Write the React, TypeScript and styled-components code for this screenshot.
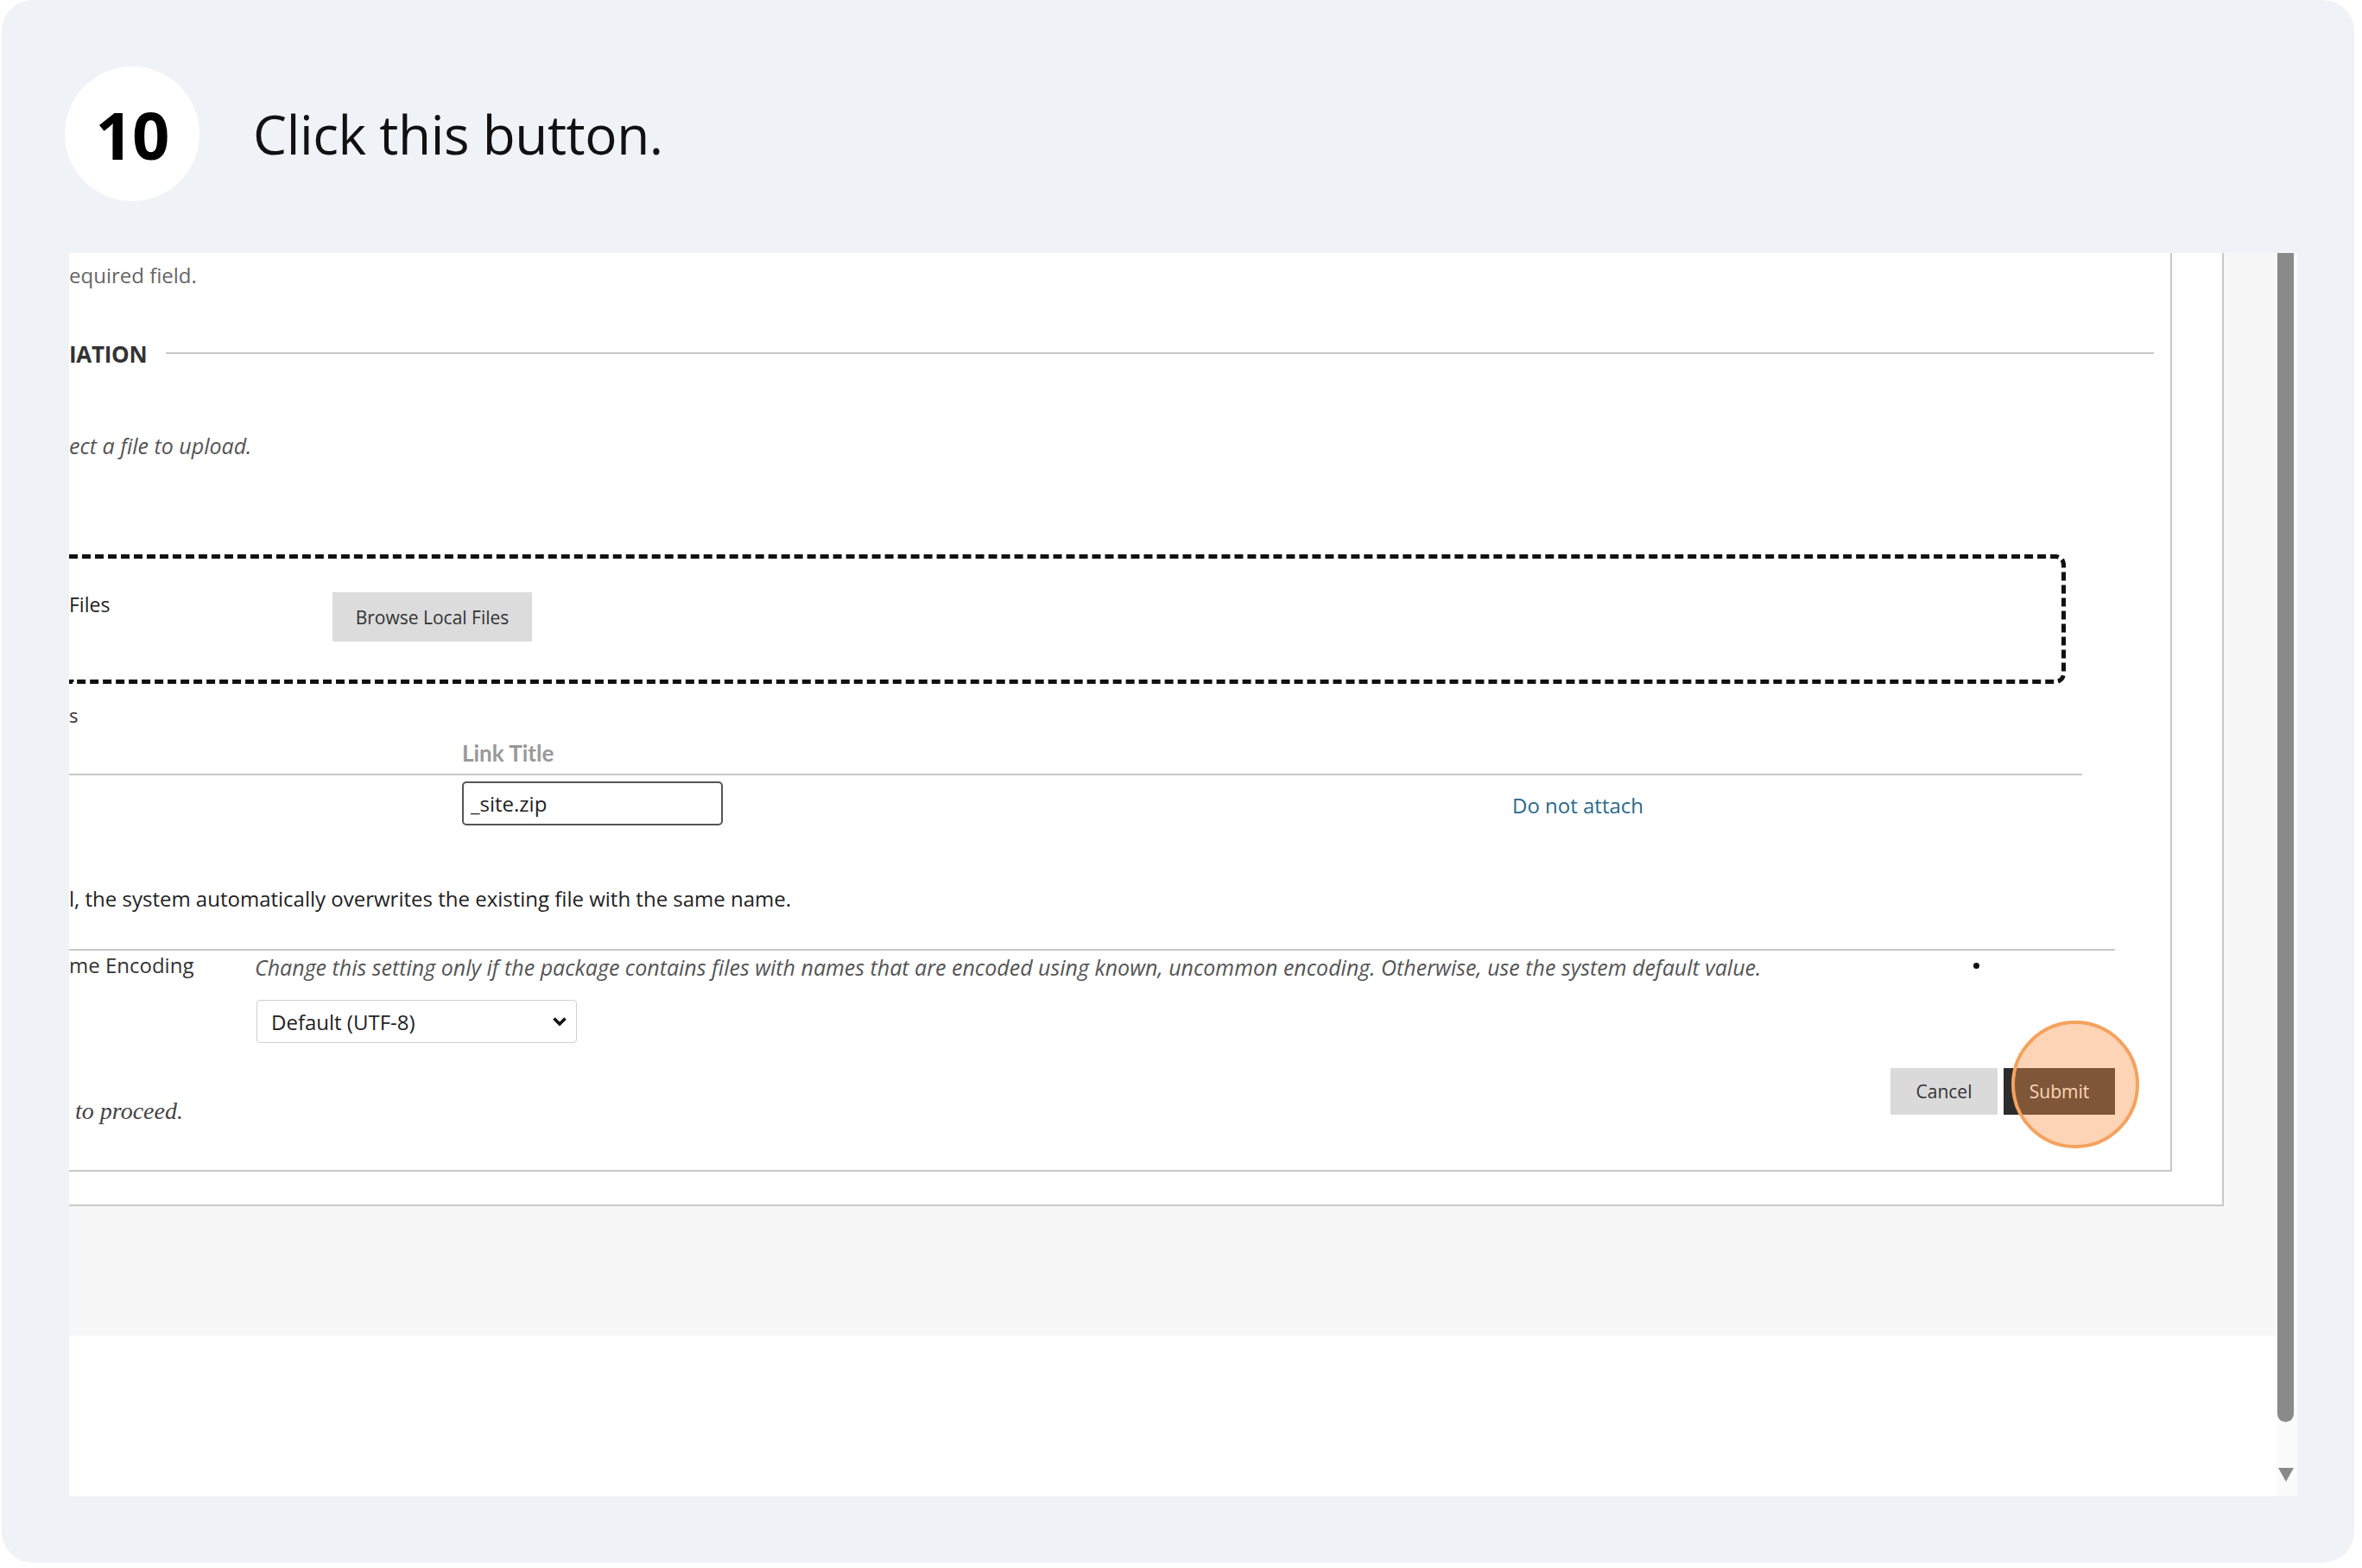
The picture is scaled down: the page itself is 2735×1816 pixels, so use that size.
import React from "react";
import styled, { createGlobalStyle } from "styled-components";

const Global = createGlobalStyle`
  html, body { margin: 0; padding: 0; background: #ffffff; }
  body { font-family: "Open Sans", "Noto Sans", sans-serif; color: #222; }
  * { box-sizing: border-box; }
`;

const Card = styled.div`
  margin: 0 9px 0 2px;
  width: 2724px;
  height: 1810px;
  border-radius: 36px;
  background: #eff3f8;
  display: flex;
  flex-direction: column;
`;

const Header = styled.header`
  height: 293px;
  display: flex;
  align-items: center;
  padding: 17px 0 0 73px;
  gap: 62px;
`;

const StepBadge = styled.div`
  width: 156px;
  height: 156px;
  border-radius: 50%;
  background: #ffffff;
  display: flex;
  align-items: center;
  justify-content: center;
  font-family: "Open Sans", sans-serif;
  font-weight: 700;
  font-size: 76px;
  color: #000;
  letter-spacing: -1px;
`;

const StepTitle = styled.h1`
  margin: 0;
  font-family: "Open Sans", sans-serif;
  font-weight: 400;
  font-size: 62px;
  color: #111;
  letter-spacing: -0.4px;
`;

const Viewport = styled.div`
  margin-left: 78px;
  width: 2580px;
  height: 1440px;
  display: flex;
  overflow: hidden;
  background: #ffffff;
`;

const PageColumn = styled.div`
  flex: 1;
  display: flex;
  flex-direction: column;
`;

const PageBody = styled.div`
  height: 1254px;
  background: #f7f7f7;
  display: flex;
  align-items: flex-start;
`;

const Footer = styled.div`
  flex: 1;
  background: #ffffff;
`;

const OuterPanel = styled.div`
  width: 2495px;
  height: 1104px;
  background: #ffffff;
  border-right: 2px solid #c8c8c8;
  border-bottom: 2px solid #c8c8c8;
  padding: 0 58px 0 0;
`;

const Form = styled.form`
  height: 1064px;
  border-right: 2px solid #c8c8c8;
  border-bottom: 2px solid #c8c8c8;
  padding-right: 64px;
  display: flex;
  flex-direction: column;
  font-size: 24px;
`;

const Note = styled.div`
  height: 52px;
  line-height: 52px;
  color: #666;
  font-size: 24px;
  white-space: nowrap;
`;

const SectionHeader = styled.div`
  margin-top: 39px;
  margin-right: -45px;
  height: 52px;
  display: flex;
  align-items: center;
  gap: 22px;
`;

const SectionTitle = styled.span`
  font-weight: 700;
  font-size: 26px;
  color: #333;
  letter-spacing: -0.3px;
`;

const Rule = styled.span`
  flex: 1;
  height: 2px;
  background: #c8c8c8;
  margin-top: -3px;
`;

const Instruction = styled.div`
  margin-top: 54px;
  height: 52px;
  line-height: 52px;
  font-style: italic;
  font-size: 25px;
  color: #555;
`;

const DropZone = styled.div`
  margin-top: 100px;
  margin-right: 57px;
  height: 150px;
  border: 5px dashed #111;
  border-left: none;
  border-radius: 0 12px 12px 0;
  display: flex;
  align-items: flex-start;
`;

const ZoneLabel = styled.span`
  width: 305px;
  margin-top: 33px;
  line-height: 40px;
  font-size: 23px;
  color: #222;
`;

const GreyButton = styled.button`
  margin-top: 39px;
  height: 57px;
  width: 231px;
  border: none;
  background: #dcdcdc;
  color: #333;
  font-family: "Open Sans", sans-serif;
  font-size: 21px;
  padding: 0;
`;

const Fragment = styled.div`
  margin-top: 16px;
  height: 40px;
  line-height: 40px;
  font-size: 22px;
  color: #333;
`;

const TableHead = styled.div`
  margin-right: 38px;
  height: 50px;
  border-bottom: 2px solid #c8c8c8;
  display: grid;
  grid-template-columns: 455px 1216px 1fr;
`;

const HeadCell = styled.span`
  grid-column: 2;
  line-height: 48px;
  font-family: "Lato", "Open Sans", sans-serif;
  font-weight: 700;
  font-size: 26px;
  color: #999;
`;

const TableRow = styled.div`
  margin-right: 38px;
  padding-top: 7px;
  display: grid;
  grid-template-columns: 455px 1216px 1fr;
  align-items: center;
`;

const TitleInput = styled.div`
  grid-column: 2;
  width: 302px;
  height: 51px;
  border: 2px solid #555;
  border-radius: 5px;
  padding-left: 8px;
  display: flex;
  align-items: center;
  font-size: 24px;
  color: #222;
`;

const LinkText = styled.a`
  padding-top: 4px;
  font-size: 24px;
  color: #2b6a8a;
  text-decoration: none;
`;

const BodyText = styled.div`
  margin-top: 65px;
  line-height: 40px;
  font-size: 24px;
  color: #222;
  white-space: nowrap;
`;

const EncodingSection = styled.div`
  margin-top: 38px;
  border-top: 2px solid #c8c8c8;
  display: grid;
  grid-template-columns: 215px 1990px 1fr;
  row-gap: 19px;
`;

const FieldLabel = styled.span`
  line-height: 34px;
  font-size: 24px;
  color: #333;
`;

const Hint = styled.span`
  line-height: 38px;
  font-style: italic;
  font-size: 25px;
  color: #555;
  white-space: nowrap;
`;

const Bullet = styled.span`
  width: 7px;
  height: 7px;
  margin-top: 14px;
  border-radius: 50%;
  background: #111;
`;

const SelectBox = styled.div`
  grid-column: 2;
  margin-left: 2px;
  width: 371px;
  height: 50px;
  border: 1.5px solid #cfcfcf;
  border-radius: 4px;
  display: flex;
  align-items: center;
  justify-content: space-between;
  padding: 0 10px 0 16px;
  font-size: 24px;
  color: #222;
`;

const ActionRow = styled.div`
  margin-top: 29px;
  display: flex;
  justify-content: space-between;
  align-items: flex-start;
`;

const ProceedText = styled.span`
  margin-top: 30px;
  padding-left: 7px;
  line-height: 40px;
  font-family: "Liberation Serif", "DejaVu Serif", serif;
  font-style: italic;
  font-size: 28px;
  color: #444;
`;

const ButtonGroup = styled.div`
  display: flex;
  gap: 7px;
`;

const ActionButton = styled.button<{ $primary?: boolean }>`
  position: relative;
  height: 54px;
  width: ${(p) => (p.$primary ? "129px" : "124px")};
  border: none;
  padding: 0;
  background: ${(p) => (p.$primary ? "#2d2d2d" : "#dadada")};
  color: ${(p) => (p.$primary ? "#ffffff" : "#333")};
  font-family: "Open Sans", sans-serif;
  font-size: 21px;
`;

const Highlight = styled.span`
  position: absolute;
  left: 9px;
  top: -55px;
  width: 148px;
  height: 148px;
  border-radius: 50%;
  border: 4px solid #f4a25c;
  background: rgba(250, 148, 70, 0.4);
  pointer-events: none;
`;

const Scrollbar = styled.div`
  width: 24px;
  background: #fbfbfb;
  display: flex;
  flex-direction: column;
  align-items: flex-start;
`;

const Thumb = styled.div`
  margin-left: 1px;
  width: 19px;
  height: 1354px;
  background: #8a8a8a;
  border-radius: 0 0 10px 10px;
`;

const ArrowDown = styled.svg`
  margin-top: 52px;
  margin-left: 0px;
`;

export default function App() {
  return (
    <>
      <Global />
      <Card>
        <Header>
          <StepBadge>10</StepBadge>
          <StepTitle>Click this button.</StepTitle>
        </Header>
        <Viewport>
          <PageColumn>
            <PageBody>
              <OuterPanel>
                <Form>
                  <Note>equired field.</Note>
                  <SectionHeader>
                    <SectionTitle>IATION</SectionTitle>
                    <Rule />
                  </SectionHeader>
                  <Instruction>ect a file to upload.</Instruction>
                  <DropZone>
                    <ZoneLabel>Files</ZoneLabel>
                    <GreyButton type="button">Browse Local Files</GreyButton>
                  </DropZone>
                  <Fragment>s</Fragment>
                  <TableHead>
                    <HeadCell>Link Title</HeadCell>
                  </TableHead>
                  <TableRow>
                    <span />
                    <TitleInput>_site.zip</TitleInput>
                    <LinkText href="#">Do not attach</LinkText>
                  </TableRow>
                  <BodyText>
                    l, the system automatically overwrites the existing file with the same name.
                  </BodyText>
                  <EncodingSection>
                    <FieldLabel>me Encoding</FieldLabel>
                    <Hint>
                      Change this setting only if the package contains files with names that are encoded using known, uncommon encoding. Otherwise, use the system default value.
                    </Hint>
                    <Bullet />
                    <SelectBox>
                      <span>Default (UTF-8)</span>
                      <svg width="18" height="14" viewBox="0 0 18 14">
                        <path d="M2.5 3.5 L9 10 L15.5 3.5" fill="none" stroke="#111" strokeWidth="3.5" />
                      </svg>
                    </SelectBox>
                  </EncodingSection>
                  <ActionRow>
                    <ProceedText>to proceed.</ProceedText>
                    <ButtonGroup>
                      <ActionButton type="button">Cancel</ActionButton>
                      <ActionButton type="button" $primary>
                        Submit
                        <Highlight />
                      </ActionButton>
                    </ButtonGroup>
                  </ActionRow>
                </Form>
              </OuterPanel>
            </PageBody>
            <Footer />
          </PageColumn>
          <Scrollbar>
            <Thumb />
            <ArrowDown width="22" height="18" viewBox="0 0 22 18">
              <path d="M2 1 L20 1 L11 17 Z" fill="#8a8a8a" />
            </ArrowDown>
          </Scrollbar>
        </Viewport>
      </Card>
    </>
  );
}
